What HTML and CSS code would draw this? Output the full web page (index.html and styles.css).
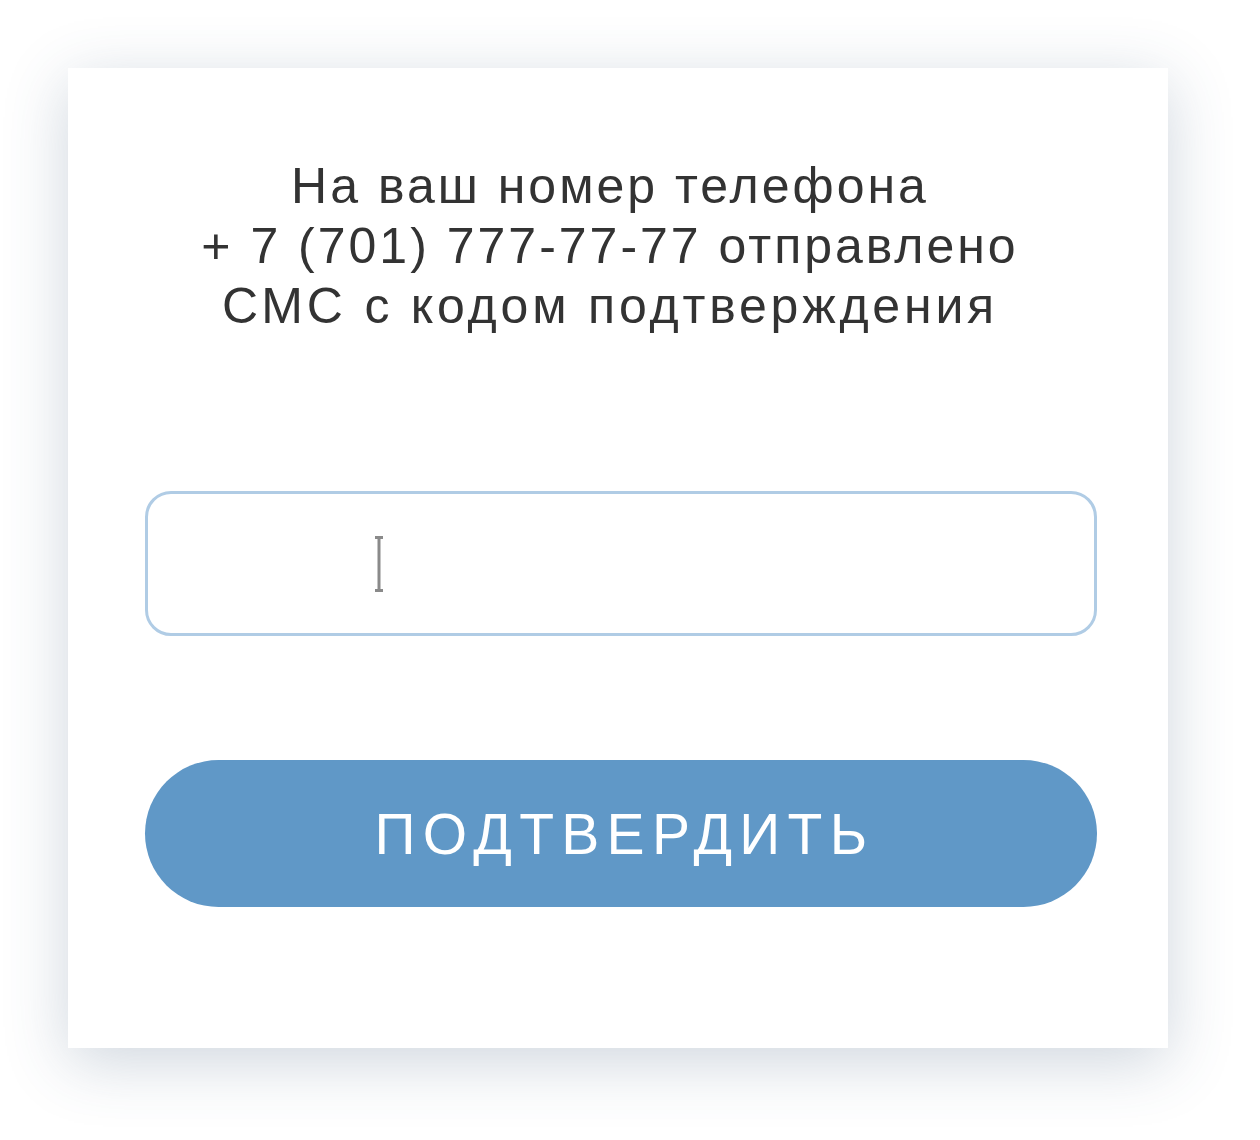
FILE: index.html
```html
<!DOCTYPE html>
<html lang="ru">
<head>
<meta charset="utf-8">
<link rel="stylesheet" href="styles.css">
</head>
<body>
<div class="page">
  <div class="card">
    <p class="message">На ваш номер телефона<br>+ 7 (701) 777-77-77 отправлено<br><span class="wide">СМС с кодом подтверждения</span></p>
    <div class="code-input">
      <svg class="caret" width="10" height="56" viewBox="0 0 10 56"><path d="M1 1.5h8M5 1.5v53M1 54.5h8" stroke="#8a8a8a" stroke-width="3" fill="none"/></svg>
    </div>
    <button class="confirm">ПОДТВЕРДИТЬ</button>
  </div>
</div>
</body>
</html>
```
FILE: styles.css
```css
html, body {
  margin: 0;
  padding: 0;
  background: #ffffff;
}
.page {
  width: 1260px;
  height: 1140px;
  padding: 68px 0 0 68px;
  box-sizing: border-box;
}
.card {
  width: 1100px;
  height: 980px;
  background: #ffffff;
  box-shadow: 0 14px 60px rgba(55, 85, 115, 0.24);
  box-sizing: border-box;
  padding: 0 71px 0 77px;
  display: flex;
  flex-direction: column;
  font-family: "Liberation Sans", Arial, sans-serif;
}
.message {
  margin: 88px 0 0 -22px;
  text-align: center;
  font-size: 50px;
  line-height: 60px;
  letter-spacing: 3px;
  color: #333333;
}
.wide {
  letter-spacing: 3.8px;
}
.code-input {
  margin-top: 155px;
  height: 145px;
  border: 3px solid #b0cce5;
  border-radius: 26px;
  box-sizing: border-box;
  display: flex;
  align-items: center;
  padding-left: 226px;
}
.caret {
  display: block;
}
.confirm {
  margin-top: 124px;
  height: 147px;
  border: none;
  border-radius: 74px;
  background: #6098c7;
  color: #ffffff;
  font-family: "Liberation Sans", Arial, sans-serif;
  font-size: 57px;
  letter-spacing: 7.3px;
  padding: 0;
  padding-left: 7px;
}
```
